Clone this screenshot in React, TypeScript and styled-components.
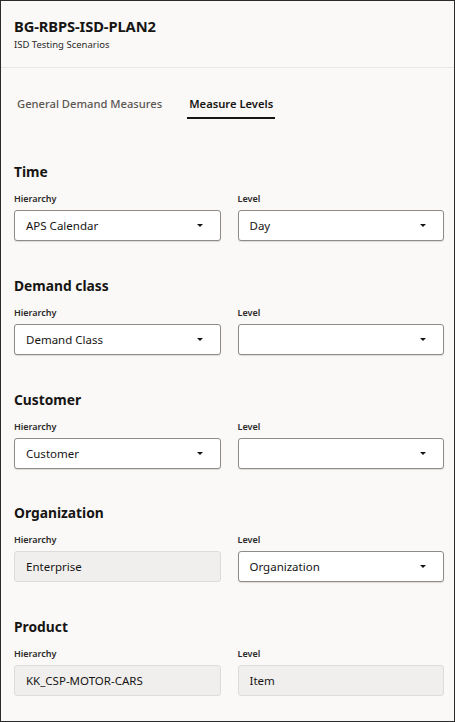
import { styled, createGlobalStyle } from "styled-components";

const GlobalStyle = createGlobalStyle`
  html, body { margin: 0; padding: 0; }
  body {
    font-family: "Noto Sans", "Open Sans", Arial, sans-serif;
    color: #161513;
    background: #faf9f8;
  }
  * { box-sizing: border-box; }
`;

type Field = { value: string; readOnly?: boolean };
type Group = { title: string; hierarchy: Field; level: Field };

const groups: Group[] = [
  { title: "Time", hierarchy: { value: "APS Calendar" }, level: { value: "Day" } },
  { title: "Demand class", hierarchy: { value: "Demand Class" }, level: { value: "" } },
  { title: "Customer", hierarchy: { value: "Customer" }, level: { value: "" } },
  {
    title: "Organization",
    hierarchy: { value: "Enterprise", readOnly: true },
    level: { value: "Organization" },
  },
  {
    title: "Product",
    hierarchy: { value: "KK_CSP-MOTOR-CARS", readOnly: true },
    level: { value: "Item", readOnly: true },
  },
];

const Caret = () => (
  <svg width="6" height="3" viewBox="0 0 6 3">
    <path d="M0 0 L6 0 L3 3 Z" fill="#161513" />
  </svg>
);

const InputField = ({ label, field }: { label: string; field: Field }) => (
  <FieldCol>
    <Label>{label}</Label>
    <Box $readOnly={field.readOnly}>
      <Value>{field.value}</Value>
      {!field.readOnly && <Caret />}
    </Box>
  </FieldCol>
);

const App = () => {
  return (
    <>
      <GlobalStyle />
      <Frame>
        <Header>
          <Title>BG-RBPS-ISD-PLAN2</Title>
          <Subtitle>ISD Testing Scenarios</Subtitle>
        </Header>
        <Tabs>
          <Tab>General Demand Measures</Tab>
          <Tab $active>Measure Levels</Tab>
        </Tabs>
        <Body>
          {groups.map((g) => (
            <Section key={g.title}>
              <SectionTitle>{g.title}</SectionTitle>
              <Row>
                <InputField label="Hierarchy" field={g.hierarchy} />
                <InputField label="Level" field={g.level} />
              </Row>
            </Section>
          ))}
        </Body>
      </Frame>
    </>
  );
};

const Frame = styled.div`
  width: 455px;
  height: 722px;
  border: 1px solid #2a2a2a;
  background: #faf9f8;
  overflow: hidden;
`;

const Header = styled.header`
  height: 67px;
  padding: 15px 13px 0;
  border-bottom: 1px solid #e8e6e3;
`;

const Title = styled.div`
  font-size: 14.7px;
  font-weight: 700;
  line-height: 20px;
  letter-spacing: -0.1px;
`;

const Subtitle = styled.div`
  font-size: 9.5px;
  line-height: 14px;
  margin-top: 2px;
  color: #2b2a28;
`;

const Tabs = styled.nav`
  display: flex;
  gap: 23px;
  padding: 0 0 0 14px;
  margin-top: 20px;
`;

const Tab = styled.div<{ $active?: boolean }>`
  padding: 8px 2px 0;
  height: 31px;
  font-size: 11.2px;
  line-height: 16px;
  font-weight: ${(p) => (p.$active ? 600 : 500)};
  color: ${(p) => (p.$active ? "#161513" : "#5b5652")};
  border-bottom: 2px solid ${(p) => (p.$active ? "#161513" : "transparent")};
`;

const Body = styled.main`
  padding: 43px 10px 0 13px;
  display: flex;
  flex-direction: column;
  gap: 34.75px;
`;

const Section = styled.section`
  display: flex;
  flex-direction: column;
`;

const SectionTitle = styled.h2`
  margin: 0;
  font-size: 13.8px;
  line-height: 20px;
  font-weight: 700;
  margin-bottom: 10px;
`;

const Row = styled.div`
  display: grid;
  grid-template-columns: 1fr 1fr;
  gap: 17px;
`;

const FieldCol = styled.div`
  display: flex;
  flex-direction: column;
`;

const Label = styled.label`
  font-size: 9px;
  line-height: 13px;
  font-weight: 600;
  color: #2b2a28;
  margin-bottom: 5px;
`;

const Box = styled.div<{ $readOnly?: boolean }>`
  height: 31px;
  display: flex;
  align-items: center;
  justify-content: space-between;
  padding: 0 17px 0 11px;
  border-radius: 3px;
  border: 1px solid ${(p) => (p.$readOnly ? "#dedcd9" : "#8f8b86")};
  background: ${(p) => (p.$readOnly ? "#f1efed" : "#ffffff")};
  box-shadow: ${(p) => (p.$readOnly ? "none" : "0 1px 1px rgba(0,0,0,0.12)")};
`;

const Value = styled.span`
  font-size: 11.5px;
  color: #161513;
`;

export default App;
